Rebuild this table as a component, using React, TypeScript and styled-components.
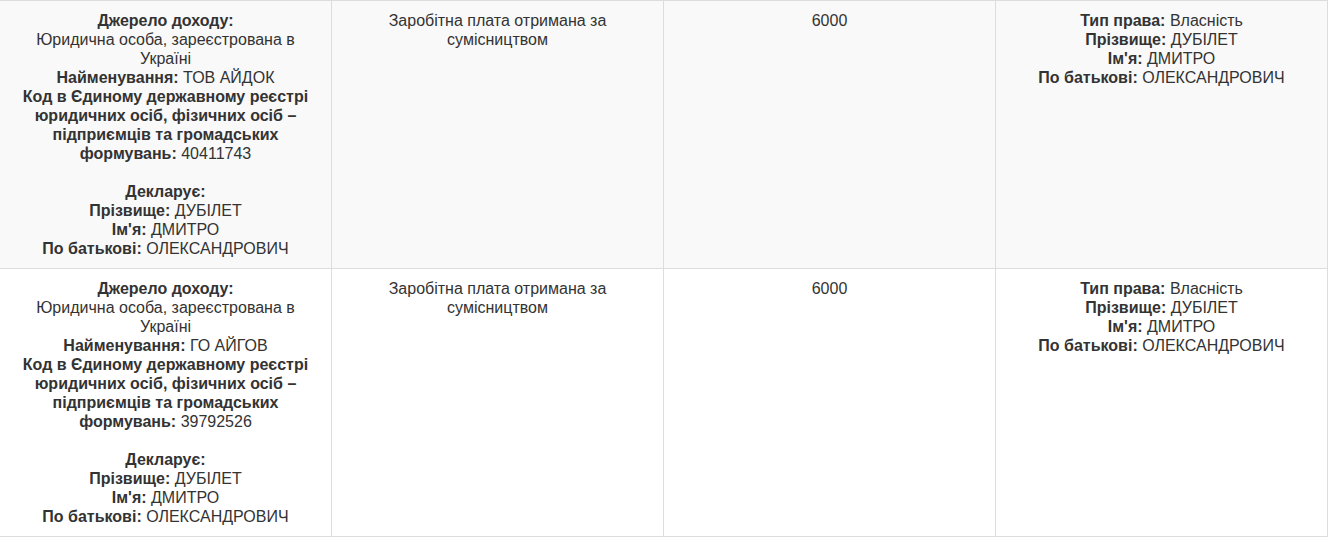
import React from "react";
import styled, { createGlobalStyle } from "styled-components";

type Person = { surname: string; name: string; patronymic: string };

type IncomeRow = {
  company: string;
  code: string;
  kind: string;
  amount: string;
  person: Person;
};

const person: Person = {
  surname: "ДУБІЛЕТ",
  name: "ДМИТРО",
  patronymic: "ОЛЕКСАНДРОВИЧ",
};

const rows: IncomeRow[] = [
  {
    company: "ТОВ АЙДОК",
    code: "40411743",
    kind: "Заробітна плата отримана за сумісництвом",
    amount: "6000",
    person,
  },
  {
    company: "ГО АЙГОВ",
    code: "39792526",
    kind: "Заробітна плата отримана за сумісництвом",
    amount: "6000",
    person,
  },
];

export default function App() {
  return (
    <>
      <GlobalStyle />
      <Table>
        {rows.map((row, i) => (
          <Row key={i} $striped={i % 2 === 0}>
            <Cell>
              <Label>Джерело доходу:</Label>
              <br />
              Юридична особа, зареєстрована в Україні
              <br />
              <Label>Найменування:</Label> {row.company}
              <br />
              <Label>
                Код в Єдиному державному реєстрі юридичних осіб, фізичних осіб –
                підприємців та громадських формувань:
              </Label>{" "}
              {row.code}
              <br />
              <br />
              <Label>Декларує:</Label>
              <br />
              <Label>Прізвище:</Label> {row.person.surname}
              <br />
              <Label>Ім'я:</Label> {row.person.name}
              <br />
              <Label>По батькові:</Label> {row.person.patronymic}
            </Cell>
            <Cell>{row.kind}</Cell>
            <Cell>{row.amount}</Cell>
            <Cell>
              <Label>Тип права:</Label> Власність
              <br />
              <Label>Прізвище:</Label> {row.person.surname}
              <br />
              <Label>Ім'я:</Label> {row.person.name}
              <br />
              <Label>По батькові:</Label> {row.person.patronymic}
            </Cell>
          </Row>
        ))}
      </Table>
    </>
  );
}

const GlobalStyle = createGlobalStyle`
  body {
    margin: 0;
    background: #fff;
    font-family: "Liberation Sans", Arial, sans-serif;
    color: #333;
  }
`;

const Table = styled.div`
  width: 1328px;
  border-top: 1px solid #ddd;
`;

const Row = styled.div<{ $striped: boolean }>`
  display: grid;
  grid-template-columns: repeat(4, 332px);
  background: ${(p) => (p.$striped ? "#f9f9f9" : "#fff")};
`;

const Cell = styled.div`
  box-sizing: border-box;
  padding: 10px 16px 10px;
  border-right: 1px solid #ddd;
  border-bottom: 1px solid #ddd;
  font-size: 16px;
  line-height: 19px;
  text-align: center;
`;

const Label = styled.b`
  font-weight: bold;
`;
